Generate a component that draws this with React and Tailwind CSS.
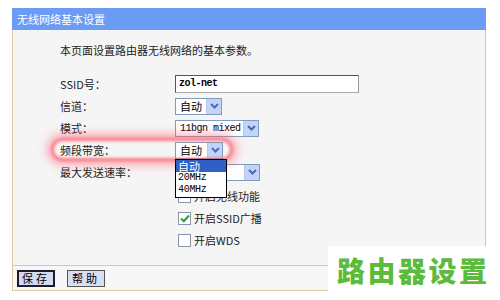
import React from 'react';

const cjk = "font-['SimSun','Noto_Sans_CJK_SC',sans-serif]";
const mono = "font-['Liberation_Mono','Noto_Sans_CJK_SC',monospace]";

function Arrow() {
  return (
    <span className="flex h-full w-[15px] items-center justify-center bg-[#c3d3fd] border-l border-[#b6c6ee]">
      <svg width="9" height="6" viewBox="0 0 9 6">
        <path d="M1 1 L4.5 4.5 L8 1" fill="none" stroke="#4d6aa8" strokeWidth="2" />
      </svg>
    </span>
  );
}

function Select({ value, width, monoText }) {
  return (
    <div
      className={`flex h-[17px] items-stretch border border-[#7f9db9] bg-white ${width}`}
    >
      <span
        className={`flex-1 pl-[4px] leading-[15px] text-black ${monoText ? `${mono} text-[10px] tracking-[-0.5px]` : 'text-[11px]'}`}
      >
        {value}
      </span>
      <Arrow />
    </div>
  );
}

function Checkbox({ checked }) {
  return (
    <span className="flex h-[13px] w-[13px] items-center justify-center border border-[#8a96a8] bg-white">
      {checked && (
        <svg width="10" height="9" viewBox="0 0 10 9">
          <path d="M1 4.5 L3.8 7.2 L9 1.5" fill="none" stroke="#2aa02a" strokeWidth="2" />
        </svg>
      )}
    </span>
  );
}

function Row({ label, children }) {
  return (
    <div className="flex h-[22px] items-center">
      <span className="w-[115px] text-[11px] text-[#222]">{label}</span>
      {children}
    </div>
  );
}

function CheckRow({ checked, text }) {
  return (
    <div className="flex h-[22px] items-center pl-[118px]">
      <Checkbox checked={checked} />
      <span className="ml-[3px] text-[11px] text-[#222]">{text}</span>
    </div>
  );
}

export default function App() {
  return (
    <div className={`relative h-[300px] w-[500px] overflow-hidden bg-white ${cjk}`}>
      <div className="ml-[12px] pt-[8px] w-[474px]">
        <div className="h-[22px] bg-[#6b9bf4] pl-[5px] text-[11px] leading-[22px] text-white">
          无线网络基本设置
        </div>
        <div className="h-[235px] border-x border-[#dec7a0] bg-[#f5f5f5] pl-[47px] pt-[12px]">
          <p className="text-[11px] leading-[16px] text-[#222]">本页面设置路由器无线网络的基本参数。</p>
          <div className="mt-[15px]">
            <Row label="SSID号：">
              <div className="flex h-[18px] w-[184px] items-center border border-[#555] border-r-[#999] border-b-[#aaa] bg-white pl-[3px]">
                <span className={`${mono} text-[10px] font-bold leading-[14px] tracking-[-0.5px] text-black`}>zol-net</span>
              </div>
            </Row>
            <Row label="信道：">
              <Select value="自动" width="w-[47px]" />
            </Row>
            <Row label="模式：">
              <Select value="11bgn mixed" width="w-[84px]" monoText />
            </Row>
            <Row label="频段带宽：">
              <Select value="自动" width="w-[48px]" />
            </Row>
            <Row label="最大发送速率：">
              <Select value="" width="w-[85px]" />
            </Row>
          </div>
          <div className="mt-[2px]">
            <CheckRow checked={false} text="开启无线功能" />
            <CheckRow checked text="开启SSID广播" />
            <CheckRow checked={false} text="开启WDS" />
          </div>
        </div>
        <div className="flex h-[26px] items-center gap-[12px] border border-[#dec7a0] bg-[#f7f7f7] pl-[4px]">
          <button className="h-[17px] w-[38px] border-2 border-[#1c1c2c] bg-[#d6daf0] text-[11px] leading-[13px] tracking-[3px] text-black">
            保存
          </button>
          <button className="h-[17px] w-[38px] border border-[#555] bg-[#dadef2] text-[11px] leading-[15px] tracking-[3px] text-black">
            帮助
          </button>
        </div>
      </div>

      {/* red highlight */}
      <div className="absolute left-[51px] top-[138px] h-[23px] w-[182px] rounded-[12px] border-[3px] border-[#ff5e70]/85 shadow-[0_0_8px_4px_rgba(255,90,110,0.5)] blur-[1.5px]" />

      {/* opened dropdown list */}
      <div className="absolute left-[175px] top-[159px] w-[52px] border border-black bg-white text-[11px] leading-[12px]">
        <div className="bg-[#3160c4] pl-[2px] text-white">自动</div>
        <div className={`${mono} pl-[2px] text-[10px] tracking-[-0.3px] text-black`}>20MHz</div>
        <div className={`${mono} pb-[1px] pl-[2px] text-[10px] tracking-[-0.3px] text-black`}>40MHz</div>
      </div>

      {/* watermark */}
      <div className="absolute left-[328px] top-[246px] flex h-[54px] w-[172px] items-start bg-white pl-[9px] pt-[7px]">
        <span className="font-['Noto_Sans_CJK_SC',sans-serif] text-[28px] font-black leading-[34px] tracking-[2.5px] text-[#5dbb3c]">
          路由器设置
        </span>
      </div>
    </div>
  );
}
